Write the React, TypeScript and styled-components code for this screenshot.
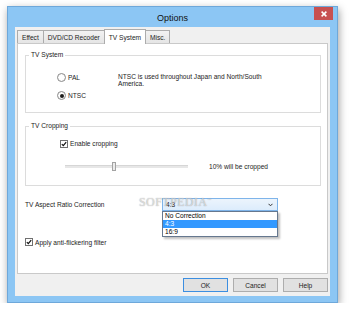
import styled, { createGlobalStyle } from "styled-components";

const GlobalStyle = createGlobalStyle`
  body {
    margin: 0;
    background: #fff;
    font-family: "Liberation Sans", Arial, sans-serif;
    font-size: 6.6px;
    color: #1c1c1c;
  }
`;

const tabs = ["Effect", "DVD/CD Recoder", "TV System", "Misc."];
const aspectOptions = ["No Correction", "4:3", "16:9"];

const App = () => {
  const activeTab = "TV System";
  const aspect = "4:3";
  const cropPos = 38; // slider thumb, percent of track

  return (
    <>
      <GlobalStyle />
      <Window>
        <TitleBar>
          <span />
          <Title>Options</Title>
          <CloseButton>
            <svg width="6" height="6" viewBox="0 0 6 6">
              <path d="M0.6 0.6 L5.4 5.4 M5.4 0.6 L0.6 5.4" stroke="#fff" strokeWidth="1.5" />
            </svg>
          </CloseButton>
        </TitleBar>

        <Client>
          <TabRow>
            {tabs.map((t) => (
              <Tab key={t} $active={t === activeTab}>
                {t}
              </Tab>
            ))}
          </TabRow>

          <Panel>
            <Group $height={58}>
              <Legend>TV System</Legend>
              <SystemRow>
                <RadioColumn>
                  <Option>
                    <Radio />
                    PAL
                  </Option>
                  <Option>
                    <Radio $checked />
                    NTSC
                  </Option>
                </RadioColumn>
                <Description>NTSC is used throughout Japan and North/South America.</Description>
              </SystemRow>
            </Group>

            <Group $height={60} $gap={13}>
              <Legend>TV Cropping</Legend>
              <CropBody>
                <Option>
                  <CheckBox>
                    <CheckMark />
                  </CheckBox>
                  Enable cropping
                </Option>
                <SliderRow>
                  <Slider>
                    <Track />
                    <Thumb style={{ left: `${cropPos}%` }} />
                  </Slider>
                  <CropLabel>10% will be cropped</CropLabel>
                </SliderRow>
              </CropBody>
            </Group>

            <AspectRow>
              <AspectLabel>TV Aspect Ratio Correction</AspectLabel>
              <Combo>
                <ComboValue>
                  {aspect}
                  <svg width="5" height="4" viewBox="0 0 5 4">
                    <path d="M0.5 0.8 L2.5 2.8 L4.5 0.8" stroke="#333" strokeWidth="1" fill="none" />
                  </svg>
                </ComboValue>
                <DropList>
                  {aspectOptions.map((o) => (
                    <DropItem key={o} $selected={o === aspect}>
                      {o}
                    </DropItem>
                  ))}
                </DropList>
              </Combo>
            </AspectRow>

            <FlickerRow>
              <CheckBox>
                <CheckMark />
              </CheckBox>
              Apply anti-flickering filter
            </FlickerRow>

            <Watermark>
              SOFTPEDIA<sup>™</sup>
            </Watermark>
          </Panel>

          <ButtonRow>
            <Button $default>OK</Button>
            <Button>Cancel</Button>
            <Button>Help</Button>
          </ButtonRow>
        </Client>
      </Window>
    </>
  );
};

const CheckMark = () => (
  <svg width="6" height="6" viewBox="0 0 6 6">
    <path d="M0.8 3.1 L2.3 4.6 L5.2 1.1" stroke="#111" strokeWidth="1.2" fill="none" />
  </svg>
);

const Window = styled.div`
  box-sizing: border-box;
  margin: 6px 0 0 7px;
  width: 331px;
  height: 297px;
  padding: 0 7px 6px 7px;
  display: flex;
  flex-direction: column;
  background: #8cc6f4;
  border: 1px solid #6ea8da;
  box-shadow: 1px 3px 8px rgba(0, 0, 0, 0.38);
`;

const TitleBar = styled.div`
  height: 20px;
  display: grid;
  grid-template-columns: 1fr auto 1fr;
  align-items: start;
`;

const Title = styled.div`
  align-self: center;
  font-size: 9px;
  color: #111;
  padding-top: 1px;
`;

const CloseButton = styled.div`
  justify-self: end;
  margin-right: -3px;
  width: 19px;
  height: 13px;
  background: #c75050;
  display: flex;
  align-items: center;
  justify-content: center;
`;

const Client = styled.div`
  flex: 1;
  display: flex;
  flex-direction: column;
  padding: 3px 2px 0 2px;
  background: #f0f0f0;
`;

const TabRow = styled.div`
  height: 13px;
  display: flex;
  align-items: flex-end;
`;

const Tab = styled.div<{ $active?: boolean }>`
  box-sizing: border-box;
  height: ${(p) => (p.$active ? 15 : 13)}px;
  margin-bottom: ${(p) => (p.$active ? -1 : 0)}px;
  margin-right: -1px;
  padding: 0 4px;
  display: flex;
  align-items: center;
  border: 1px solid #acacac;
  border-bottom: none;
  background: ${(p) => (p.$active ? "#fff" : "linear-gradient(#f2f2f2, #e5e5e5)")};
  position: relative;
  z-index: ${(p) => (p.$active ? 1 : 0)};
`;

const Panel = styled.div`
  position: relative;
  height: 231px;
  box-sizing: border-box;
  padding: 11px 6px 0 7px;
  background: #fff;
  border: 1px solid #c9c9c9;
`;

const Group = styled.div<{ $height: number; $gap?: number }>`
  position: relative;
  box-sizing: border-box;
  height: ${(p) => p.$height}px;
  margin-top: ${(p) => p.$gap ?? 0}px;
  border: 1px solid #dcdcdc;
`;

const Legend = styled.div`
  position: absolute;
  top: -5px;
  left: 3px;
  padding: 0 2px;
  line-height: 8px;
  background: #fff;
`;

const SystemRow = styled.div`
  display: flex;
  padding: 17px 0 0 31px;
`;

const RadioColumn = styled.div`
  width: 61px;
  display: flex;
  flex-direction: column;
  gap: 9px;
`;

const Option = styled.div`
  height: 9px;
  display: flex;
  align-items: center;
  gap: 2px;
`;

const Radio = styled.span<{ $checked?: boolean }>`
  box-sizing: border-box;
  width: 9px;
  height: 9px;
  border-radius: 50%;
  border: 1px solid #8a8a8a;
  background: radial-gradient(circle, #fff 40%, #ececec 100%);
  display: flex;
  align-items: center;
  justify-content: center;

  &::after {
    content: "";
    display: ${(p) => (p.$checked ? "block" : "none")};
    width: 4px;
    height: 4px;
    border-radius: 50%;
    background: #1e1e1e;
  }
`;

const Description = styled.div`
  width: 152px;
  line-height: 7px;
`;

const CropBody = styled.div`
  padding: 12px 0 0 34px;
`;

const CheckBox = styled.span`
  box-sizing: border-box;
  width: 8px;
  height: 8px;
  border: 1px solid #707070;
  background: #fff;
  display: flex;
  align-items: center;
  justify-content: center;
`;

const SliderRow = styled.div`
  margin: 14px 0 0 5px;
  display: flex;
  align-items: center;
`;

const Slider = styled.div`
  position: relative;
  width: 123px;
  height: 9px;
  display: flex;
  align-items: center;
`;

const Track = styled.div`
  width: 100%;
  height: 2px;
  background: #e7e7e7;
  border-top: 1px solid #d6d6d6;
`;

const Thumb = styled.div`
  position: absolute;
  top: 0;
  box-sizing: border-box;
  width: 4px;
  height: 9px;
  background: #ececec;
  border: 1px solid #a3a3a3;
`;

const CropLabel = styled.div`
  margin-left: 21px;
`;

const AspectRow = styled.div`
  margin-top: 12px;
  height: 13px;
  display: flex;
  align-items: center;
`;

const AspectLabel = styled.div`
  width: 137px;
`;

const Combo = styled.div`
  position: relative;
  width: 116px;
  height: 13px;
`;

const ComboValue = styled.div`
  box-sizing: border-box;
  height: 100%;
  padding: 0 4px 0 3px;
  display: flex;
  align-items: center;
  justify-content: space-between;
  border: 1px solid #7eb4ea;
  background: linear-gradient(#ecf4fc, #dcecfc);
`;

const DropList = styled.div`
  position: absolute;
  top: 100%;
  left: 0;
  z-index: 2;
  box-sizing: border-box;
  width: 100%;
  border: 1px solid #66788f;
  background: #fff;
  box-shadow: 2px 2px 2px rgba(0, 0, 0, 0.25);
`;

const DropItem = styled.div<{ $selected?: boolean }>`
  height: 8px;
  line-height: 8px;
  padding: 0 2px;
  background: ${(p) => (p.$selected ? "#3399ff" : "transparent")};
  color: ${(p) => (p.$selected ? "#fff" : "#000")};
`;

const FlickerRow = styled.div`
  margin-top: 27px;
  height: 8px;
  display: flex;
  align-items: center;
  gap: 2px;
`;

const Watermark = styled.div`
  position: absolute;
  left: 121px;
  top: 151px;
  z-index: 3;
  font-family: "Liberation Serif", serif;
  font-size: 12px;
  letter-spacing: 0.4px;
  line-height: 10px;
  color: rgba(255, 255, 255, 0.6);
  text-shadow: 0 0 1px rgba(0, 0, 0, 0.45);
  pointer-events: none;

  sup {
    font-size: 4px;
  }
`;

const ButtonRow = styled.div`
  margin-top: 4px;
  display: flex;
  justify-content: flex-end;
  gap: 5px;
`;

const Button = styled.div<{ $default?: boolean }>`
  box-sizing: border-box;
  width: 45px;
  height: 14px;
  display: flex;
  align-items: center;
  justify-content: center;
  background: #e1e1e1;
  border: 1px solid ${(p) => (p.$default ? "#3c8ee0" : "#adadad")};
`;

export default App;
